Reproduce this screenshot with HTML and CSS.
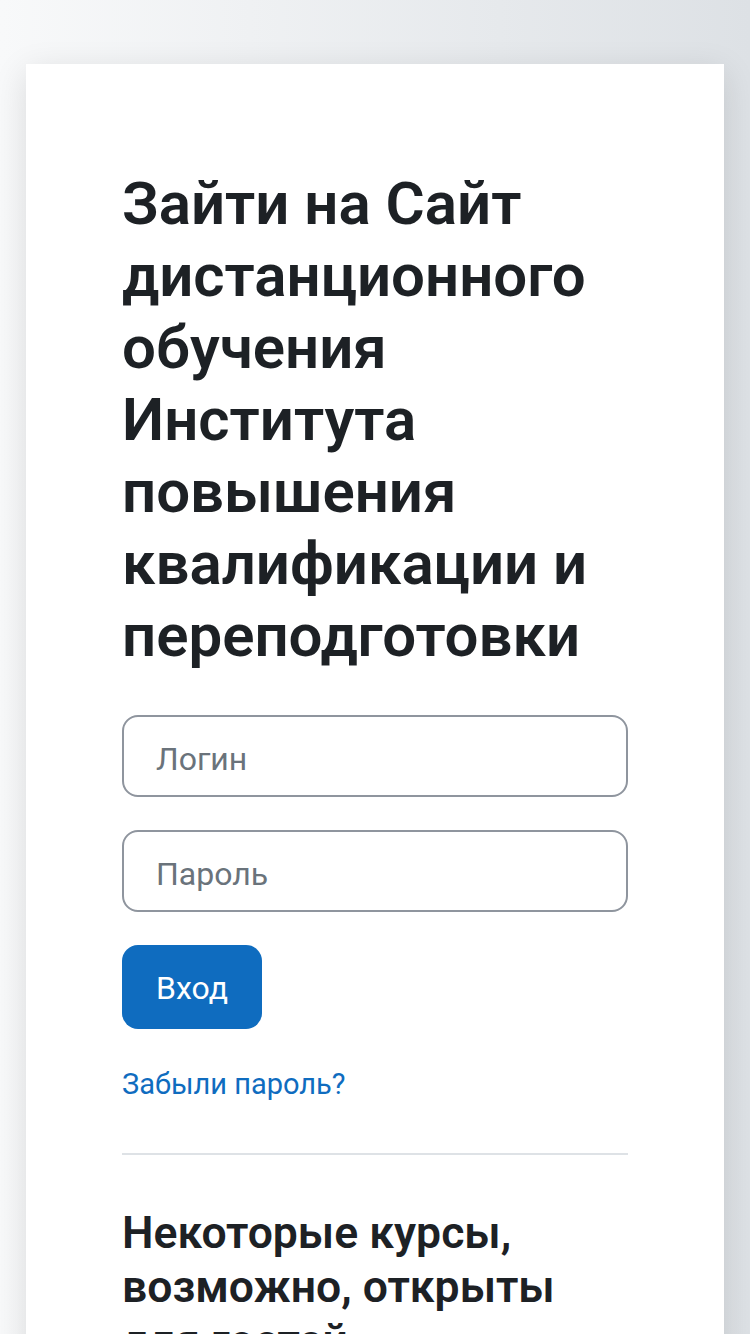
FILE: index.html
```html
<!DOCTYPE html>
<html lang="ru">
<head>
<meta charset="utf-8">
<title>Вход</title>
<link rel="stylesheet" href="styles.css">
</head>
<body>
<div class="page">
  <main class="card">
    <h1 class="login-heading">Зайти на Сайт дистанционного обучения Института повышения квалификации и переподготовки</h1>
    <form class="login-form">
      <input class="field" type="text" placeholder="Логин">
      <input class="field" type="password" placeholder="Пароль">
      <button class="btn" type="button">Вход</button>
    </form>
    <a class="forgot" href="#">Забыли пароль?</a>
    <hr class="divider">
    <h2 class="sub-heading">Некоторые курсы, возможно, открыты для гостей</h2>
  </main>
</div>
</body>
</html>
```
FILE: styles.css
```css
html, body {
  margin: 0;
  padding: 0;
  height: 100%;
  overflow: hidden;
}
body {
  font-family: Roboto, "Liberation Sans", sans-serif;
  background: linear-gradient(to right, #f8f9fa 0%, #dde1e5 100%);
  color: #1d2125;
}
.page {
  padding: 64px 26px 0;
}
.card {
  background: #fff;
  box-shadow: 0 8px 32px rgba(0, 0, 0, 0.12);
  padding: 104px 96px 200px;
  display: flex;
  flex-direction: column;
}
.login-heading {
  margin: 0 0 43px;
  font-size: 60px;
  line-height: 72px;
  font-weight: 600;
  color: #1d2125;
}
.login-form {
  display: flex;
  flex-direction: column;
  align-items: flex-start;
  gap: 33px;
}
.field {
  box-sizing: border-box;
  width: 100%;
  height: 82px;
  border: 2px solid #8f959e;
  border-radius: 16px;
  padding: 6px 32px 0;
  font-family: inherit;
  font-size: 32px;
  color: #1d2125;
  background: #fff;
  outline: none;
}
.field::placeholder {
  color: #6a737b;
  opacity: 1;
}
.btn {
  box-sizing: border-box;
  height: 84px;
  padding: 2px 34px 0;
  border: 0;
  border-radius: 16px;
  background: #0f6cbf;
  color: #fff;
  font-family: inherit;
  font-size: 32px;
}
.forgot {
  margin-top: 34px;
  align-self: flex-start;
  color: #0f6cbf;
  text-decoration: none;
  font-size: 29px;
  line-height: 43px;
}
.divider {
  width: 100%;
  margin: 47px 0 0;
  border: 0;
  border-top: 2px solid #dee2e6;
}
.sub-heading {
  margin: 51px 0 0;
  font-size: 44.5px;
  line-height: 54px;
  font-weight: 600;
  color: #1d2125;
}
```
